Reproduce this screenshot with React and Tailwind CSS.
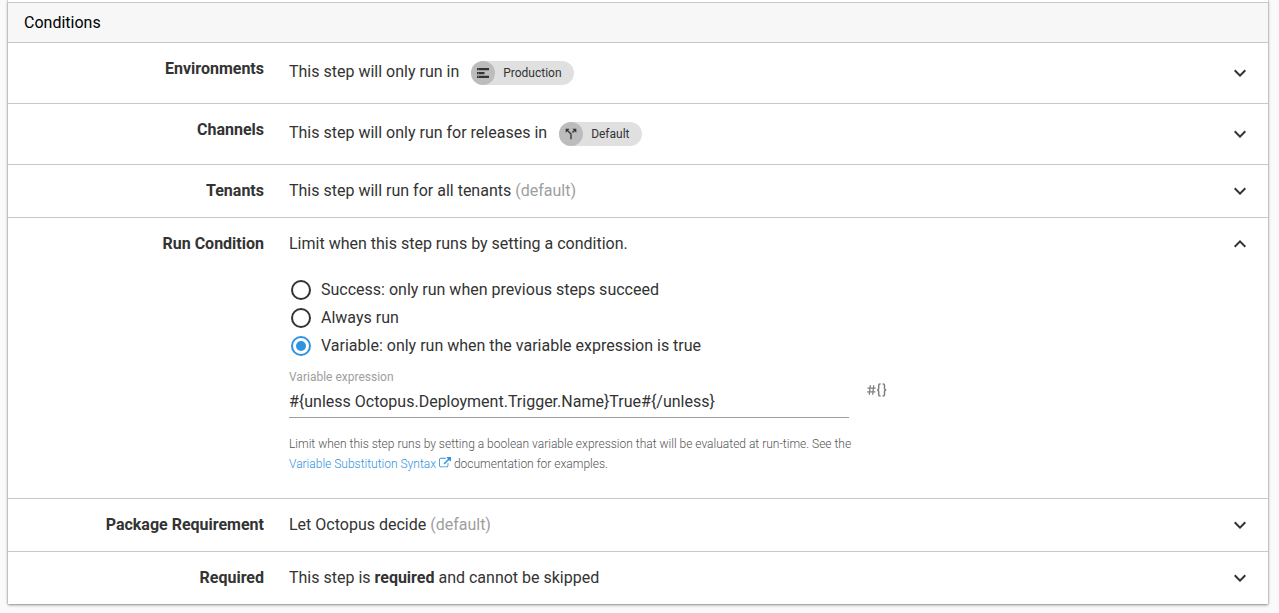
import { useState } from "react";

function Chevron({ open }) {
  return (
    <svg viewBox="0 0 24 24" className="size-6" fill="#333333" aria-hidden="true">
      {open ? (
        <path d="M12 8l-6 6 1.41 1.41L12 10.83l4.59 4.58L18 14z" />
      ) : (
        <path d="M16.59 8.59L12 13.17 7.41 8.59 6 10l6 6 6-6z" />
      )}
    </svg>
  );
}

function Row({ label, open = false, children }) {
  return (
    <section className="flex items-start border-t border-[#c8c8c8] py-4 pr-4">
      <h2 className="w-64 shrink-0 text-right leading-5 font-bold">{label}</h2>
      <div className="ml-[25px] min-w-0 flex-1">{children}</div>
      <button
        type="button"
        aria-label={label}
        aria-expanded={open}
        className="-my-0.5 flex shrink-0 items-center self-start"
      >
        <Chevron open={open} />
      </button>
    </section>
  );
}

function ChipRow({ label, text, chip, icon }) {
  return (
    <section className="flex items-start border-t border-[#c8c8c8] py-4 pr-4">
      <h2 className="w-64 shrink-0 text-right leading-5 font-bold">{label}</h2>
      <div className="ml-[25px] flex h-7 min-w-0 flex-1 items-center gap-3">
        <span className="pb-0.5 leading-6">{text}</span>
        <span className="flex h-6 items-center rounded-full bg-[#e0e0e0] pr-3 text-xs">
          <span className="mr-2 flex size-6 items-center justify-center rounded-full bg-[#bcbcbc]">
            {icon}
          </span>
          {chip}
        </span>
      </div>
      <button
        type="button"
        aria-label={label}
        aria-expanded="false"
        className="flex shrink-0 items-center self-center"
      >
        <Chevron />
      </button>
    </section>
  );
}

const environmentIcon = (
  <svg viewBox="0 0 12 10" className="h-[10px] w-3" aria-hidden="true">
    <path fill="#333333" d="M0 0h12v2.300H0zM0 3.900h7.500v2.300H0zM0 7.700h12V10H0z" />
    <path fill="#bcbcbc" d="M1 .8h.8v.7H1zM1 4.700h.8v.7H1zM1 8.500h.8v.7H1z" />
  </svg>
);

const channelIcon = (
  <svg viewBox="0 0 24 24" className="size-4" fill="#333333" aria-hidden="true">
    <path d="M14 4l2.290 2.290-2.880 2.880 1.420 1.420 2.880-2.880L20 10V4h-6zm-4 0H4v6l2.290-2.290 4.710 4.700V20h2v-8.410l-5.290-5.300L10 4z" />
  </svg>
);

const options = [
  ["success", "Success: only run when previous steps succeed"],
  ["always", "Always run"],
  ["variable", "Variable: only run when the variable expression is true"],
];

export default function App() {
  const [condition, setCondition] = useState("variable");
  return (
    <div className="min-h-screen bg-[#fafafa] pr-[11px] pb-2 pl-2 font-['Roboto',sans-serif] text-base text-[#333333]">
      <main className="bg-white pt-0.5 shadow-[0_1px_3px_rgba(0,0,0,0.4),0_0_1px_rgba(0,0,0,0.5)]">
        <h1 className="border-t border-[#c8c8c8] bg-[#f7f7f7] px-4 py-2 leading-[23px] text-black">
          Conditions
        </h1>
        <ChipRow
          label="Environments"
          text="This step will only run in"
          chip="Production"
          icon={environmentIcon}
        />
        <ChipRow
          label="Channels"
          text="This step will only run for releases in"
          chip="Default"
          icon={channelIcon}
        />
        <Row label="Tenants">
          <p className="leading-5">
            This step will run for all tenants <span className="text-[#9e9e9e]">(default)</span>
          </p>
        </Row>
        <Row label="Run Condition" open>
          <p className="leading-5">Limit when this step runs by setting a condition.</p>
          <fieldset className="mt-[22px]">
            {options.map(([value, text]) => (
              <label key={value} className="flex h-7 items-center gap-2.5 pl-0.5">
                <input
                  type="radio"
                  name="condition"
                  value={value}
                  checked={condition === value}
                  onChange={() => setCondition(value)}
                  className="size-5 shrink-0 appearance-none rounded-full border-2 border-[#333333] bg-clip-content p-[3px] checked:border-[#2f93e0] checked:bg-[#2f93e0]"
                />
                {text}
              </label>
            ))}
          </fieldset>
          <div className="flex items-start">
            <div className="w-[560px] pt-[7px]">
              <label htmlFor="expression" className="block text-xs leading-5 text-[#9e9e9e]">
                Variable expression
              </label>
              <input
                id="expression"
                type="text"
                defaultValue="#{unless Octopus.Deployment.Trigger.Name}True#{/unless}"
                className="block h-[31px] w-full border-b border-[#9e9e9e] bg-transparent pb-0.5 outline-none"
              />
            </div>
            <button
              type="button"
              aria-label="Insert variable"
              className="mt-[23px] ml-[18px] flex"
            >
              <svg
                viewBox="0 0 20 14"
                className="h-[14px] w-5"
                fill="none"
                stroke="#808080"
                strokeWidth="1.5"
                aria-hidden="true"
              >
                <path d="M3.300 2.200L2.300 11.800M6.700 2.200L5.700 11.800M.5 5.200h8.200M.2 8.800h8.200" strokeWidth="1.300" />
                <path d="M13.600 1h-.6q-1.300 0-1.300 1.300v2.900q0 1.800-1.700 1.800 1.700 0 1.700 1.800v2.900q0 1.300 1.300 1.300h.6" />
                <path d="M15.600 1h.6q1.300 0 1.300 1.300v2.900q0 1.800 1.700 1.800-1.700 0-1.700 1.800v2.900q0 1.300-1.300 1.300h-.6" />
              </svg>
            </button>
          </div>
          <p className="mt-4 mb-2 max-w-[600px] text-xs leading-5 font-light text-[#555555]">
            Limit when this step runs by setting a boolean variable expression that will be evaluated at run-time. See the{" "}
            <a href="#syntax" className="text-[#2f93e0]">
              Variable Substitution Syntax{" "}
              <svg viewBox="0 0 1792 1792" className="inline size-3 align-[-1px]" fill="#2f93e0" aria-hidden="true">
                <path d="M1408 928v320q0 119-84.500 203.500t-203.500 84.500h-832q-119 0-203.500-84.500t-84.500-203.500v-832q0-119 84.500-203.500t203.500-84.500h704q14 0 23 9t9 23v64q0 14-9 23t-23 9h-704q-66 0-113 47t-47 113v832q0 66 47 113t113 47h832q66 0 113-47t47-113v-320q0-14 9-23t23-9h64q14 0 23 9t9 23zm384-864v512q0 26-19 45t-45 19-45-19l-176-176-652 652q-10 10-23 10t-23-10l-114-114q-10-10-10-23t10-23l652-652-176-176q-19-19-19-45t19-45 45-19h512q26 0 45 19t19 45z" />
              </svg>
            </a>{" "}
            documentation for examples.
          </p>
        </Row>
        <Row label="Package Requirement">
          <p className="leading-5">
            Let Octopus decide <span className="text-[#9e9e9e]">(default)</span>
          </p>
        </Row>
        <Row label="Required">
          <p className="leading-5">
            This step is <strong className="font-bold">required</strong> and cannot be skipped
          </p>
        </Row>
      </main>
    </div>
  );
}
